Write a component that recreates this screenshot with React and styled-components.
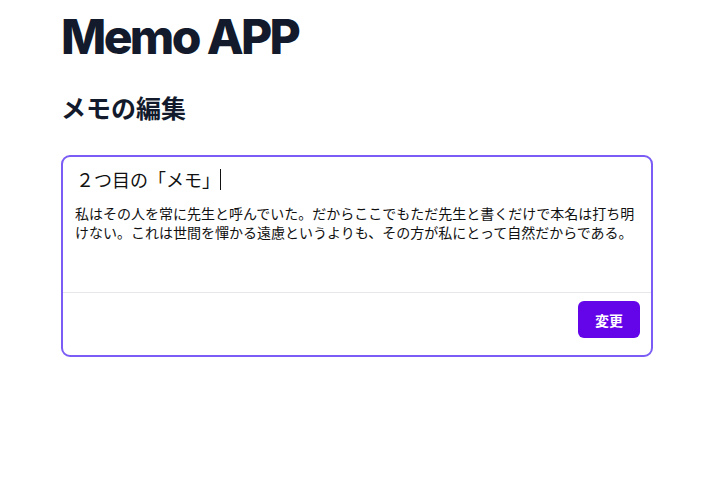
import React from "react";
import styled, { createGlobalStyle } from "styled-components";

const Global = createGlobalStyle`
  html, body { margin: 0; padding: 0; background: #ffffff; }
  body {
    font-family: Inter, "Noto Sans CJK JP", sans-serif;
    color: #111827;
  }
`;

const Page = styled.main`
  padding: 0 0 0 61px;
  width: 592px;
`;

const AppTitle = styled.h1`
  margin: 0;
  padding-top: 8px;
  font-family: Inter, sans-serif;
  font-size: 48px;
  line-height: 58px;
  font-weight: 800;
  letter-spacing: -0.055em;
  color: #121a2c;
`;

const SectionTitle = styled.h2`
  margin: 25px 0 0 0;
  font-family: "Noto Sans CJK JP", sans-serif;
  font-size: 25px;
  line-height: 32px;
  font-weight: 700;
  color: #121a2c;
`;

const Card = styled.section`
  margin-top: 32px;
  border: 2px solid #7b5cf4;
  border-radius: 9px;
  height: 202px;
  box-sizing: border-box;
  display: flex;
  flex-direction: column;
  background: #fff;
`;

const TitleField = styled.div`
  display: flex;
  align-items: center;
  height: 44px;
  padding: 0 12px 0 13px;
  font-family: "Noto Sans CJK JP", sans-serif;
  font-size: 18px;
  color: #111;
`;

const Caret = styled.span`
  display: inline-block;
  width: 1px;
  height: 21px;
  background: #111;
`;

const BodyField = styled.div`
  flex: 1;
  padding: 3px 12px 0 12px;
  font-family: "Noto Sans CJK JP", sans-serif;
  font-size: 14px;
  line-height: 19px;
  color: #111;
`;

const Footer = styled.div`
  display: flex;
  justify-content: flex-end;
  border-top: 1px solid #e5e7eb;
  padding: 8px 11px 0 12px;
  height: 63px;
  box-sizing: border-box;
`;

const Button = styled.button`
  width: 62px;
  height: 37px;
  border: none;
  border-radius: 6px;
  background: #6404e8;
  color: #fff;
  font-family: "Noto Sans CJK JP", sans-serif;
  font-size: 14px;
  font-weight: 700;
  cursor: pointer;
  padding: 0;
`;

export default function App() {
  return (
    <>
      <Global />
      <Page>
        <AppTitle>Memo APP</AppTitle>
        <SectionTitle>メモの編集</SectionTitle>
        <Card>
          <TitleField>
            ２つ目の「メモ」
            <Caret />
          </TitleField>
          <BodyField>
            私はその人を常に先生と呼んでいた。だからここでもただ先生と書くだけで本名は打ち明けない。これは世間を憚かる遠慮というよりも、その方が私にとって自然だからである。
          </BodyField>
          <Footer>
            <Button type="button">変更</Button>
          </Footer>
        </Card>
      </Page>
    </>
  );
}
